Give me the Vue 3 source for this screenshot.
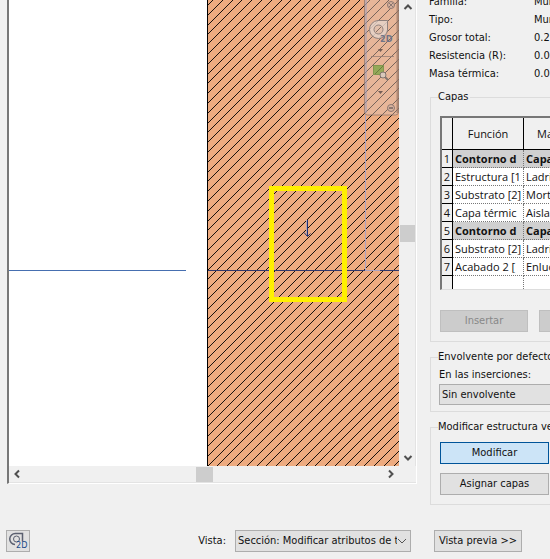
<script setup>
const hatch = Array.from({ length: 68 }, (_, k) => 212 + Math.round(k * 9.8))

const facts = [
  ['Familia:', 'Muro básico'],
  ['Tipo:', 'Muro exterior'],
  ['Grosor total:', '0.2900'],
  ['Resistencia (R):', '0.0000'],
  ['Masa térmica:', '0.0000']
]

const layers = [
  { fn: 'Contorno d', material: 'Capas', core: true },
  { fn: 'Estructura [1', material: 'Ladrillo' },
  { fn: 'Substrato [2]', material: 'Mortero' },
  { fn: 'Capa térmic', material: 'Aislante' },
  { fn: 'Contorno d', material: 'Capas', core: true },
  { fn: 'Substrato [2]', material: 'Ladrillo' },
  { fn: 'Acabado 2 [', material: 'Enlucido' }
]
</script>

<template>
  <main class="dialog">
    <div class="workspace">
      <section class="preview">
        <svg class="drawing" viewBox="9 0 390 466" preserveAspectRatio="xMinYMin slice">
          <defs>
            <clipPath id="wall"><rect x="208" y="0" width="191" height="466" /></clipPath>
          </defs>
          <rect x="9" y="0" width="390" height="466" fill="#fff" />
          <rect x="208" y="0" width="191" height="466" fill="#edab80" />
          <g clip-path="url(#wall)" stroke="#000" stroke-width=".9" shape-rendering="crispEdges">
            <line v-for="c in hatch" :key="c" :x1="c + 1" y1="0" :x2="c - 466" y2="467" />
          </g>
          <rect x="207" y="0" width="1" height="466" fill="#000" />
          <rect x="9" y="270" width="177" height="1" fill="#466fb0" />
          <rect x="208" y="270" width="191" height="1" fill="#30386c" />
          <rect x="365" y="115" width="1" height="156" fill="#aaa3c2" />
          <rect x="365" y="270" width="15" height="1" fill="#aaa3c2" />
          <rect x="306" y="220" width="1" height="14" fill="#b3a3b5" />
          <rect x="307" y="220" width="1" height="16" fill="#1d2f73" />
          <path d="M304 232.500L307.500 236.500L310.500 233.500" fill="none" stroke="#1d2f73" />
          <rect x="271.500" y="188.500" width="73" height="111" fill="none" stroke="#fff000" stroke-width="5" />

          <g class="navbar">
            <rect x="364.500" y="-6" width="34" height="121" rx="3" fill="#dfc2b3" fill-opacity=".48" stroke="#89746b" stroke-opacity=".7" />
            <path d="M366 0V113" stroke="#9d9cb9" />
            <path d="M397.500 0V113" stroke="#987667" stroke-width="2" opacity=".7" />
            <g fill="none" stroke="#8d7770">
              <circle cx="391" cy="5" r="3.500" fill="#d8b29e" />
              <path d="M389 3L393 7M393 3L389 7" />
              <circle cx="391" cy="108" r="3.500" fill="#d8b29e" />
              <path d="M389 108H393" stroke-width="2" />
              <path d="M371 56.500H394" opacity=".7" />
            </g>
            <path d="M378 20.500H387.500V30A9 9 0 1 1 378 20.500Z" fill="#e6d7cf" fill-opacity=".75" stroke="#8f817d" />
            <circle cx="378.500" cy="29.500" r="4.500" fill="#e2c0ac" stroke="#8f817d" />
            <path d="M376 32L381 27" stroke="#5d4a42" stroke-width=".7" />
            <text x="380" y="42" class="tiny-2d" fill="#6f7487">2D</text>
            <path d="M378 49H383L380.500 52Z" fill="#735e56" />
            <rect x="373.500" y="65.500" width="10" height="9" fill="#94a958" stroke="#849650" />
            <path d="M375 74L383 66" stroke="#5d6a38" stroke-width=".7" />
            <circle cx="383" cy="75" r="3" fill="#d9c8bb" stroke="#83756e" />
            <path d="M385 77L388 80" stroke="#83756e" stroke-width="2" />
            <path d="M378 91H383L380.500 94Z" fill="#735e56" />
          </g>
        </svg>

        <div class="scroll vertical">
          <svg class="arrow" viewBox="0 0 16 14"><path d="M4.500 9L8 5.500L11.500 9" /></svg>
          <span class="thumb"></span>
          <svg class="arrow" viewBox="0 0 16 14"><path d="M4.500 4L8 7.500L11.500 4" /></svg>
        </div>
        <div class="scroll horizontal">
          <svg class="arrow" viewBox="0 0 16 16"><path d="M10 4.500L6.500 8L10 11.500" /></svg>
          <span class="thumb"></span>
          <svg class="arrow" viewBox="0 0 16 16"><path d="M6 4.500L9.500 8L6 11.500" /></svg>
        </div>
      </section>

      <section class="panel">
        <dl class="facts">
          <div v-for="[name, value] in facts" :key="name">
            <dt>{{ name }}</dt>
            <dd>{{ value }}</dd>
          </div>
        </dl>

        <fieldset class="layers">
          <legend>Capas</legend>
          <table>
            <thead>
              <tr><th class="num"></th><th class="fn">Función</th><th class="mat">Material</th></tr>
            </thead>
            <tbody>
              <tr v-for="(layer, i) in layers" :key="i" :class="{ core: layer.core }">
                <th class="num" scope="row">{{ i + 1 }}</th>
                <td>{{ layer.fn }}</td>
                <td>{{ layer.material }}</td>
              </tr>
              <tr class="blank"><th class="num"></th><td></td><td></td></tr>
            </tbody>
          </table>
          <div class="actions">
            <button type="button" disabled>Insertar</button>
            <button type="button" disabled>Suprimir</button>
          </div>
        </fieldset>

        <fieldset class="wrap">
          <legend>Envolvente por defecto</legend>
          <label for="inserts">En las inserciones:</label>
          <select id="inserts"><option>Sin envolvente</option></select>
        </fieldset>

        <fieldset class="structure">
          <legend>Modificar estructura vertical</legend>
          <button type="button" class="active">Modificar</button>
          <button type="button">Asignar capas</button>
        </fieldset>
      </section>
    </div>

    <footer class="bottom">
      <button type="button" class="wheel" aria-label="2D">
        <svg viewBox="0 0 22 20">
          <path d="M8 13.500A5.500 5.500 0 0 1 8.500 2.500H15.500V10" fill="none" stroke="#5b6070" stroke-width="1.500" />
          <circle cx="9.500" cy="8" r="3" fill="none" stroke="#5b6070" />
          <text x="9" y="17" class="icon-2d" fill="#174a88">2D</text>
        </svg>
      </button>
      <label for="view">Vista:</label>
      <span class="combo">
        <select id="view"><option>Sección: Modificar atributos de tipo</option></select>
        <svg viewBox="0 0 10 6"><path d="M1 1L5 5L9 1" fill="none" stroke="#555" /></svg>
      </span>
      <button type="button" class="toggle">Vista previa &gt;&gt;</button>
    </footer>
  </main>
</template>

<style>
body {
  margin: 0;
  background: #f0f0f0;
  overflow: hidden;
}
</style>

<style scoped>
* {
  box-sizing: border-box;
}

.dialog {
  font: 11px/14px "DejaVu Sans Condensed", "DejaVu Sans", sans-serif;
  color: #111;
  background: #f0f0f0;
}

.workspace {
  display: grid;
  grid-template-columns: minmax(0, 1fr) 125px;
  align-items: start;
}

.preview {
  display: grid;
  grid-template-columns: minmax(0, 1fr) 17px;
  margin: 0 8px 0 7px;
  border-left: 2px solid #777;
  border-right: 1px solid #fff;
  border-bottom: 1px solid #fff;
}

.drawing {
  display: block;
  width: 100%;
}

.tiny-2d {
  font-size: 9px;
  font-weight: bold;
}

.icon-2d {
  font-size: 9px;
}

.scroll {
  display: flex;
  justify-content: space-between;
  align-items: center;
}

.vertical {
  flex-direction: column;
  padding-left: 1px;
  border-right: 1px solid #e3e3e3;
}

.horizontal {
  grid-column: 1 / -1;
  height: 17px;
  padding-right: 17px;
  border-bottom: 1px solid #e3e3e3;
}

.thumb {
  width: 17px;
  height: 15px;
  background: #cdcdcd;
}

.vertical .thumb {
  width: 15px;
  height: 17px;
}

.arrow {
  width: 16px;
  height: 14px;
  fill: none;
  stroke: #505050;
  stroke-width: 2;
}

.horizontal .arrow {
  height: 16px;
}

.panel {
  overflow: hidden;
  padding-left: 5px;
}

.facts {
  margin: -7px 0 7px -1px;
}

.facts div {
  display: grid;
  grid-template-columns: 105px 1fr;
  line-height: 18px;
  white-space: nowrap;
}

.facts dd {
  margin: 0;
}

fieldset {
  width: 260px;
  margin: 0 0 8px;
  padding: 0 9px;
  border: 1px solid #dcdcdc;
}

legend {
  padding: 0 2px 0 0;
  margin-left: -2px;
  height: 14px;
  white-space: nowrap;
}

table {
  width: 240px;
  margin-top: 12px;
  table-layout: fixed;
  border-collapse: separate;
  border-spacing: 0;
  border: 1px solid #ddd;
  border-top: 2px solid #777;
  border-left: 2px solid #777;
  background: #fff;
  font: 11px/17px "Open Sans", "Noto Sans", sans-serif;
}

th,
td {
  height: 18px;
  padding: 0 0 0 2px;
  overflow: hidden;
  white-space: nowrap;
  border-right: 1px dotted #777;
  border-bottom: 1px dotted #777;
  text-align: left;
}

thead th {
  height: 32px;
  padding: 0;
  text-align: center;
  font-weight: normal;
  background: #f0f0f0;
  border-right: 1px solid #000;
  border-bottom: 1px solid #000;
}

.fn {
  width: 71px;
}

thead .mat {
  padding-left: 13px;
  text-align: left;
}

th.num {
  width: 11px;
  padding: 0;
  text-align: center;
  font-weight: normal;
  background: #f0f0f0;
  border-right: 1px solid #000;
  border-bottom: 1px solid #000;
}

.core td {
  background: #d0d0d0;
  font-weight: bold;
}

.blank th.num,
.blank td {
  height: 13px;
  border-bottom: 0;
}

.actions {
  display: flex;
  gap: 11px;
  margin: 20px 0 9px;
}

button,
select {
  font: inherit;
  color: #111;
  background: #e1e1e1;
  border: 1px solid #adadad;
  border-radius: 0;
  padding: 0;
  height: 22px;
}

button:disabled {
  color: #888;
  background: #ccc;
  border-color: #bfbfbf;
}

.actions button,
.toggle {
  width: 88px;
}

select {
  display: block;
  appearance: none;
  width: 100%;
  padding: 0 24px 0 2px;
}

.wrap label {
  display: block;
  margin: 4px 0 2px -1px;
}

.wrap select {
  height: 21px;
  margin-left: -1px;
}

.wrap {
  padding-bottom: 6px;
}

.structure {
  padding-bottom: 9px;
  margin-bottom: 0;
}

.structure button {
  display: block;
  width: 109px;
  margin-top: 9px;
}

.structure .active {
  margin-top: 8px;
  background: #cce4f7;
  border-color: #005499;
}

.bottom {
  display: flex;
  align-items: center;
  padding: 25px 28px 6px 6px;
}

.wheel {
  width: 24px;
}

.wheel svg {
  display: block;
  width: 22px;
  height: 20px;
}

.bottom label {
  margin-left: auto;
  margin-right: 9px;
}

.combo {
  position: relative;
  width: 176px;
  margin-right: 23px;
}

.combo select {
  padding-right: 13px;
}

.combo svg {
  position: absolute;
  right: 4px;
  top: 8px;
  width: 10px;
  height: 6px;
  pointer-events: none;
}
</style>
